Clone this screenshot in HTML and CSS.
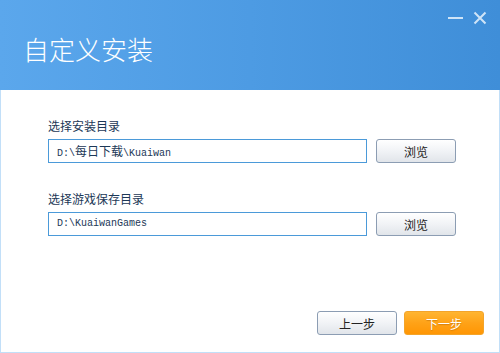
FILE: index.html
```html
<!DOCTYPE html>
<html lang="zh-CN">
<head>
  <meta charset="UTF-8">
  <title>自定义安装</title>
  <link rel="stylesheet" href="styles.css">
</head>
<body>
  <div class="window">
    <!-- Title bar -->
    <div class="header">
      <h1>自定义安装</h1>
      <div class="win-controls">
        <span class="btn-min"></span>
        <svg class="btn-close" width="14" height="14" viewBox="0 0 14 14">
          <path d="M1.5 1.5 L12.5 12.5 M12.5 1.5 L1.5 12.5" stroke="#cfe4f7" stroke-width="2" fill="none"/>
        </svg>
      </div>
    </div>

    <!-- Body -->
    <div class="content">
      <div class="field-group">
        <div class="label">选择安装目录</div>
        <div class="row">
          <div class="path-field">D:\<span class="cjk">每日下载</span>\Kuaiwan</div>
          <button class="btn">浏览</button>
        </div>
      </div>

      <div class="field-group">
        <div class="label">选择游戏保存目录</div>
        <div class="row">
          <div class="path-field">D:\KuaiwanGames</div>
          <button class="btn">浏览</button>
        </div>
      </div>

      <div class="footer">
        <button class="btn">上一步</button>
        <button class="btn btn-primary">下一步</button>
      </div>
    </div>
  </div>
</body>
</html>
```

FILE: styles.css
```css
* {
  box-sizing: border-box;
}

body {
  margin: 0;
  font-family: "Noto Sans CJK SC", "DejaVu Sans", sans-serif;
  background: #fff;
}

.window {
  width: 500px;
  height: 353px;
  display: flex;
  flex-direction: column;
}

/* Title bar */
.header {
  height: 90px;
  flex-shrink: 0;
  background: linear-gradient(to right, #5ba7ec 0%, #4d9be3 50%, #3f8ed8 100%);
  display: flex;
  justify-content: space-between;
  align-items: flex-start;
}

.header h1 {
  margin: 0;
  padding: 33px 0 0 23px;
  color: #fff;
  font-size: 26px;
  font-weight: 300;
  line-height: 32px;
}

.win-controls {
  display: flex;
  align-items: center;
  gap: 10px;
  padding: 11px 13px 0 0;
}

.btn-min {
  display: block;
  width: 15px;
  height: 2px;
  background: #cfe4f7;
}

.btn-close {
  display: block;
}

/* Body */
.content {
  flex: 1;
  border: 1px solid #c2dff8;
  border-top: none;
  padding: 28px 15px 17px 47px;
  display: flex;
  flex-direction: column;
}

.field-group {
  margin-bottom: 28px;
}

.label {
  font-size: 12px;
  line-height: 16px;
  color: #1c3857;
  margin-bottom: 5px;
}

.row {
  display: flex;
  gap: 9px;
}

.path-field {
  width: 319px;
  height: 24px;
  border: 1px solid #4b9ad9;
  padding: 0 8px;
  font-family: "Liberation Mono", "Noto Sans CJK SC", monospace;
  font-size: 10px;
  line-height: 22px;
  color: #1c3857;
  white-space: nowrap;
}

.path-field .cjk {
  font-family: "Noto Sans CJK SC", sans-serif;
  font-size: 12px;
}

.btn {
  width: 80px;
  height: 24px;
  border: 1px solid #8c9db3;
  border-radius: 3px;
  background: linear-gradient(to bottom, #ffffff 0%, #f1f3f6 50%, #e1e5ea 100%);
  font-family: "Noto Sans CJK SC", sans-serif;
  font-size: 12px;
  color: #222;
  padding: 0;
  cursor: pointer;
}

.footer {
  margin-top: auto;
  display: flex;
  justify-content: flex-end;
  gap: 7px;
}

.btn-primary {
  border-color: #f3a42a;
  background: linear-gradient(to bottom, #ffb531 0%, #ffa217 50%, #ff9604 100%);
  color: #fff;
  text-shadow: 0 1px 1px rgba(150, 80, 0, 0.4);
}
```
